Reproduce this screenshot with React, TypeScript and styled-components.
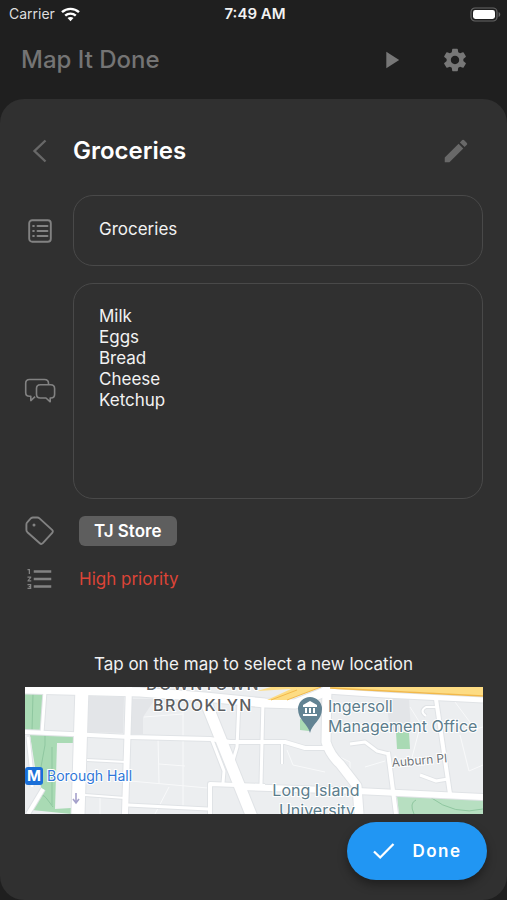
import React, { useState } from "react";
import styled, { createGlobalStyle } from "styled-components";
import { MdEdit, MdFormatListNumbered, MdPlayArrow, MdSettings } from "react-icons/md";

const GlobalStyle = createGlobalStyle`
  *, *::before, *::after { box-sizing: border-box; }
  body {
    margin: 0;
    background: #1f1f1f;
    font-family: Inter, "Liberation Sans", sans-serif;
    color: #f2f2f2;
  }
  button, input, textarea { font: inherit; color: inherit; }
`;

const Screen = styled.div`
  min-height: 100vh;
  display: flex;
  flex-direction: column;
  background: #1f1f1f;
`;

const StatusBar = styled.div`
  display: grid;
  grid-template-columns: 1fr auto 1fr;
  align-items: center;
  height: 28px;
  padding: 0 6px 0 9px;
  font-size: 14px;
  line-height: 20px;
`;

const Carrier = styled.span`
  display: flex;
  align-items: center;
  gap: 6px;
  color: #dedede;
`;

const Clock = styled.time`
  font-size: 15px;
  font-weight: 600;
`;

const BatterySlot = styled.span`
  display: flex;
  justify-content: flex-end;
`;

const AppBar = styled.header`
  display: flex;
  align-items: center;
  height: 71px;
  padding: 0 32px 7px 21px;
`;

const AppTitle = styled.span`
  flex: 1;
  font-size: 24px;
  line-height: 32px;
  font-weight: 500;
  color: #747474;
`;

const IconButton = styled.button<{ $tone?: string }>`
  display: grid;
  place-items: center;
  width: 40px;
  height: 40px;
  padding: 0;
  border: 0;
  background: none;
  color: ${(p) => p.$tone ?? "#777"};
  cursor: pointer;
`;

const BarActions = styled.div`
  display: flex;
  gap: 24px;
`;

const Sheet = styled.main`
  flex: 1;
  display: flex;
  flex-direction: column;
  padding: 32px 24px 20px;
  border-radius: 24px;
  background: #303030;
`;

const SheetHeader = styled.div`
  display: flex;
  align-items: center;
  height: 40px;
  padding: 0 7px 0 0;
`;

const BackButton = styled(IconButton)`
  width: 32px;
  margin-right: 17px;
`;

const SheetTitle = styled.h1`
  flex: 1;
  margin: 0;
  font-size: 24px;
  line-height: 32px;
  font-weight: 600;
  color: #fff;
`;

const Form = styled.form`
  display: flex;
  flex-direction: column;
  margin-top: 24px;
`;

const Row = styled.div<{ $gap?: number }>`
  display: grid;
  grid-template-columns: 32px 1fr;
  column-gap: 17px;
  align-items: center;
  margin-top: ${(p) => p.$gap ?? 0}px;
`;

const RowIcon = styled.label`
  display: grid;
  place-items: center;
  color: #828282;
`;

const TextField = styled.input`
  width: 100%;
  height: 71px;
  padding: 0 25px 4px;
  border: 1px solid #494949;
  border-radius: 20px;
  outline: 0;
  background: transparent;
  font-size: 17px;
  line-height: 21px;
`;

const NotesField = styled.textarea`
  display: block;
  width: 100%;
  height: 216px;
  padding: 22px 25px;
  border: 1px solid #494949;
  border-radius: 20px;
  outline: 0;
  resize: none;
  background: transparent;
  font-size: 17px;
  line-height: 21px;
`;

const Indent = styled.div`
  display: flex;
  padding-left: 6px;
`;

const Chip = styled.span`
  padding: 3px 15px;
  border-radius: 6px;
  background: #5e5e5e;
  font-size: 17px;
  line-height: 24px;
  font-weight: 600;
  color: #fff;
`;

const Priority = styled.span`
  font-size: 17px;
  line-height: 24px;
  color: #dc4437;
`;

const Hint = styled.p`
  margin: 58px 0 11px;
  text-align: center;
  font-size: 17px;
  line-height: 24px;
`;

const MapFrame = styled.div`
  height: 127px;
  margin-left: 1px;
  background: #eceef0;
  overflow: hidden;

  svg {
    display: block;
    width: 100%;
    height: 100%;
  }
`;

const DoneButton = styled.button`
  align-self: flex-end;
  display: flex;
  align-items: center;
  justify-content: center;
  gap: 16px;
  width: 140px;
  height: 58px;
  margin: 8px -4px 0 0;
  padding: 0;
  border: 0;
  border-radius: 29px;
  background: #2196f3;
  box-shadow: 0 5px 10px rgba(0, 0, 0, 0.35);
  color: #fff;
  font-size: 17px;
  line-height: 24px;
  font-weight: 600;
  letter-spacing: 1.5px;
  cursor: pointer;
`;

const WifiIcon = () => (
  <svg width="19" height="15" viewBox="0 0 19 15" aria-hidden="true">
    <g fill="none" stroke="#fff" strokeWidth="2.4">
      <path d="M1 5.2C5.800.7 13.200.7 18 5.200" />
      <path d="M4.200 8.700c3-2.800 7.600-2.800 10.600 0" />
    </g>
    <path d="M9.500 14.200l-3-3.100c1.700-1.600 4.300-1.600 6 0z" fill="#fff" />
  </svg>
);

const BatteryIcon = () => (
  <svg width="31" height="15" viewBox="0 0 31 15" aria-hidden="true">
    <rect x="1" y="1" width="26" height="13" rx="4" fill="none" stroke="#666" strokeWidth="1.200" />
    <rect x="3" y="3" width="22" height="9" rx="2.400" fill="#fff" />
    <path d="M28.600 5c2.200.8 2.200 4.200 0 5z" fill="#666" />
  </svg>
);

const ChevronIcon = () => (
  <svg width="32" height="28" viewBox="0 0 32 28" aria-hidden="true">
    <path d="M21.500 3.500L10.500 14l11 10.500" fill="none" stroke="currentColor" strokeWidth="2.400" />
  </svg>
);

const ListIcon = () => (
  <svg width="24" height="24" viewBox="0 0 24 24" fill="none" stroke="currentColor" aria-hidden="true">
    <rect x="1.200" y="1.200" width="21.600" height="21.600" rx="3" strokeWidth="1.900" />
    <path d="M9.500 7h10M9.500 12h10M9.500 17h10" strokeWidth="1.900" strokeLinecap="round" />
    <path d="M4.400 7h2.200M4.400 12h2.200M4.400 17h2.200" strokeWidth="2" />
  </svg>
);

const ChatIcon = () => (
  <svg width="32" height="26" viewBox="0 0 32 26" fill="none" stroke="currentColor" strokeWidth="1.600" strokeLinejoin="round" aria-hidden="true">
    <path d="M24.500 6.500V5.200c0-2.500-1.500-3.700-4-3.700h-15C3 1.500 1.700 2.900 1.700 5.300v9.200c0 2.500 1.300 3.800 3.800 3.800h1.300v4.300l4.300-4" />
    <path d="M16.300 6.800h10.400c2.600 0 3.900 1.300 3.900 3.800v5.700c0 2.500-1.300 3.700-3.700 3.700h-.7v3.800l-4.200-3.800h-5.700c-2.500 0-3.800-1.200-3.800-3.700v-5.700c0-2.500 1.300-3.800 3.800-3.800z" />
  </svg>
);

const TagIcon = () => (
  <svg width="32" height="30" viewBox="0 0 32 30" fill="none" stroke="currentColor" strokeWidth="1.900" strokeLinejoin="round" aria-hidden="true">
    <path d="M3.200 6.300L7 2.200C7.600 1.700 8 1.500 8.900 1.500h4.400c.9 0 1.500.3 2.200.9l12.600 11.500c1 .9 1 1.900.1 2.900l-9.400 10.400c-1 1-2 1-3 .1L3.400 16.200c-.7-.7-1-1.300-1-2.300V8.400c0-.9.200-1.500.8-2.100z" />
    <circle cx="10" cy="9" r="1.500" fill="currentColor" stroke="none" />
  </svg>
);

const CheckIcon = () => (
  <svg width="24" height="20" viewBox="0 0 24 20" aria-hidden="true">
    <path d="M2 10.500l6.200 6L21.500 3" fill="none" stroke="#fff" strokeWidth="2.300" />
  </svg>
);

const roads: { d: string; w: number }[] = [
  { d: "M20 4L17 46", w: 3 },
  { d: "M0 45L45 47L105 50L185 52L205 55H260L280 61L300 61", w: 4 },
  { d: "M62 73L101 75", w: 2 },
  { d: "M60 108L100 111", w: 2 },
  { d: "M103 118L183 122", w: 3 },
  { d: "M187 53L199 84L198 96", w: 3 },
  { d: "M214 14L212 60L207 77", w: 3 },
  { d: "M185 127V97L240 99", w: 4 },
  { d: "M238 13L236 97", w: 3 },
  { d: "M257 57V77", w: 2 },
  { d: "M325 57L340 55L352 64L364 67", w: 3 },
  { d: "M363 65L371 127", w: 4 },
  { d: "M411 12L425 107", w: 4 },
  { d: "M395 88L411 94L423 92", w: 3 },
  { d: "M401 29Q394 24 401 20L413 20", w: 2 },
  { d: "M104 0L100 127", w: 6 },
  { d: "M215 100L332 104L458 110", w: 6 },
  { d: "M3 50L7 88V100", w: 3 },
  { d: "M18 102L3 127", w: 4 },
  { d: "M178 8L227 130", w: 11 },
  { d: "M57 0L53 127", w: 13 },
  { d: "M302 0L301 55Q305 68 315 77L332 99L334 127", w: 9 },
  { d: "M0 2L115 5L180 10L240 16L270 17L302 4", w: 9 },
  { d: "M302 4L360 8L458 13", w: 5 },
];

const LocationMap = () => (
  <svg viewBox="0 0 458 127" preserveAspectRatio="xMidYMid slice" role="img" aria-label="Map of Downtown Brooklyn">
    <rect width="458" height="127" fill="#eceef0" />
    <path d="M63 9L99 10L98 46L62 45zM106 12H130L118 30V47L106 47zM361 10L384 12L386 44L365 44z" fill="#e3e5e8" />
    <path d="M32 56H48L46 121H30z" fill="#eef0f1" />
    <g fill="#a9dab4">
      <path d="M0 7L19 7L16 44H0zM5 48L48 48V56H32L30 122L46 121V127L7 123L17 103L10 80zM275 32L284 35V44L275 43zM371 45L384 45L385 62H372z" />
      <path d="M372 109L458 113V127H374z" fill="#b7dfc1" />
    </g>
    <g fill="none" stroke="#8fc7a0">
      <path d="M8 7L7 44M20 48V58L16 80M27 60V118M12 116Q16 103 22 112L28 120M389 127Q384 116 391 113M405 110Q430 129 458 122" />
    </g>
    <g fill="none" stroke="#f8f9fa">
      <path d="M133 50L134 96M158 20V120M105 94L183 101M119 30L158 27M134 77L160 79M262 63L268 78L300 85M305 65L325 75V92M340 80L360 74M395 40L385 78M435 48L444 84L458 78M430 15L450 42L458 40M385 20L395 36M75 109V127M144 100L130 127" />
    </g>
    <g fill="none" stroke="#e0e3e6" strokeLinejoin="round">
      {roads.map((road) => (
        <path key={road.d} d={road.d} strokeWidth={road.w + 2} />
      ))}
    </g>
    <g fill="none" stroke="#fff" strokeLinejoin="round">
      {roads.map((road) => (
        <path key={road.d} d={road.d} strokeWidth={road.w} />
      ))}
    </g>
    <path d="M305 0H458V9L390 5L310 2z" fill="#fddc83" />
    <path d="M305 1L380 5L458 9" fill="none" stroke="#f2b94b" strokeWidth="1.500" />
    <path d="M232 4L246 0H296L262 13H242L266 2z" fill="#fddc83" />
    <path d="M246 13L272 3M262 13L296 0" fill="none" stroke="#f2b94b" />
    <g fontFamily="Inter, sans-serif" fontSize="16">
      <g fill="#5b5e62" stroke="#fff" strokeWidth="2" paintOrder="stroke" fontWeight="500" letterSpacing="1.500" textAnchor="middle">
        <text x="178" y="3">DOWNTOWN</text>
        <text x="178" y="24">BROOKLYN</text>
      </g>
      <g fill="#5c7d8c" stroke="#fff" strokeWidth="2" paintOrder="stroke">
        <text x="303" y="25">Ingersoll</text>
        <text x="303" y="45">Management Office</text>
        <text x="291" y="109" textAnchor="middle">Long Island</text>
        <text x="292" y="129" textAnchor="middle">University</text>
      </g>
      <text x="367" y="80" fontSize="12" fill="#70757a" stroke="#fff" strokeWidth="2" paintOrder="stroke" transform="rotate(-5 367 80)">Auburn Pl</text>
      <text x="22" y="94" fontSize="14" fill="#3077d8" stroke="#fff" strokeWidth="2" paintOrder="stroke">Borough Hall</text>
    </g>
    <rect x="0" y="80" width="18" height="18" rx="3" fill="#1a6fd8" />
    <text x="9" y="94" fontFamily="Inter, sans-serif" fontSize="15" fontWeight="700" fill="#fff" textAnchor="middle">M</text>
    <path d="M51 106V115M48 112L51 116L54 112" fill="none" stroke="#a5a1cb" strokeWidth="1.600" />
    <path d="M285 46C283 37 273 33 273 22A12 12 0 0 1 297 22C297 33 287 37 285 46z" fill="#628393" />
    <path d="M278 20V18L285 14L292 18V20zM280 21H282V26H280zM284 21H286V26H284zM288 21H290V26H288zM278 27H292V29H278z" fill="#fff" />
  </svg>
);

export default function App() {
  const [name, setName] = useState("Groceries");
  const [notes, setNotes] = useState("Milk\nEggs\nBread\nCheese\nKetchup");

  return (
    <Screen>
      <GlobalStyle />
      <StatusBar>
        <Carrier>
          Carrier
          <WifiIcon />
        </Carrier>
        <Clock>7:49 AM</Clock>
        <BatterySlot>
          <BatteryIcon />
        </BatterySlot>
      </StatusBar>
      <AppBar>
        <AppTitle>Map It Done</AppTitle>
        <BarActions>
          <IconButton type="button" aria-label="Start">
            <MdPlayArrow size={28} />
          </IconButton>
          <IconButton type="button" aria-label="Settings">
            <MdSettings size={28} />
          </IconButton>
        </BarActions>
      </AppBar>
      <Sheet>
        <SheetHeader>
          <BackButton type="button" aria-label="Back" $tone="#686868">
            <ChevronIcon />
          </BackButton>
          <SheetTitle>Groceries</SheetTitle>
          <IconButton type="button" aria-label="Edit" $tone="#686868">
            <MdEdit size={30} />
          </IconButton>
        </SheetHeader>
        <Form onSubmit={(e) => e.preventDefault()}>
          <Row>
            <RowIcon htmlFor="task-name" aria-label="Name">
              <ListIcon />
            </RowIcon>
            <TextField id="task-name" value={name} onChange={(e) => setName(e.target.value)} />
          </Row>
          <Row $gap={17}>
            <RowIcon htmlFor="task-notes" aria-label="Notes">
              <ChatIcon />
            </RowIcon>
            <NotesField id="task-notes" value={notes} onChange={(e) => setNotes(e.target.value)} />
          </Row>
          <Row $gap={17}>
            <RowIcon as="span">
              <TagIcon />
            </RowIcon>
            <Indent>
              <Chip>TJ Store</Chip>
            </Indent>
          </Row>
          <Row $gap={18}>
            <RowIcon as="span">
              <MdFormatListNumbered size={30} />
            </RowIcon>
            <Indent>
              <Priority>High priority</Priority>
            </Indent>
          </Row>
        </Form>
        <Hint>Tap on the map to select a new location</Hint>
        <MapFrame>
          <LocationMap />
        </MapFrame>
        <DoneButton type="button">
          <CheckIcon />
          Done
        </DoneButton>
      </Sheet>
    </Screen>
  );
}
